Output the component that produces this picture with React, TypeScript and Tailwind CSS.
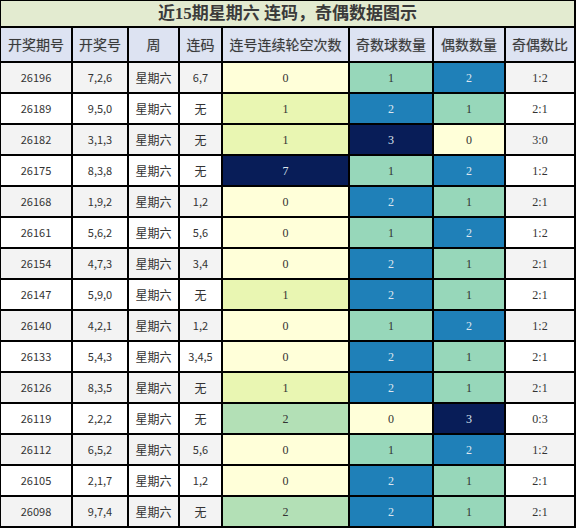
import React from "react";

type Row = [string, string, string, number, number, number, string];

const rows: Row[] = [
  ["26196", "7,2,6", "6,7", 0, 1, 2, "1:2"],
  ["26189", "9,5,0", "无", 1, 2, 1, "2:1"],
  ["26182", "3,1,3", "无", 1, 3, 0, "3:0"],
  ["26175", "8,3,8", "无", 7, 1, 2, "1:2"],
  ["26168", "1,9,2", "1,2", 0, 2, 1, "2:1"],
  ["26161", "5,6,2", "5,6", 0, 1, 2, "1:2"],
  ["26154", "4,7,3", "3,4", 0, 2, 1, "2:1"],
  ["26147", "5,9,0", "无", 1, 2, 1, "2:1"],
  ["26140", "4,2,1", "1,2", 0, 1, 2, "1:2"],
  ["26133", "5,4,3", "3,4,5", 0, 2, 1, "2:1"],
  ["26126", "8,3,5", "无", 1, 2, 1, "2:1"],
  ["26119", "2,2,2", "无", 2, 0, 3, "0:3"],
  ["26112", "6,5,2", "5,6", 0, 1, 2, "1:2"],
  ["26105", "2,1,7", "1,2", 0, 2, 1, "2:1"],
  ["26098", "9,7,4", "无", 2, 2, 1, "2:1"],
];

const streakClass: Record<number, string> = {
  0: "bg-[#ffffd9] text-[#333]",
  1: "bg-[#e9f6b2] text-[#333]",
  2: "bg-[#b3e0b6] text-[#333]",
  7: "bg-[#081d58] text-[#dde6ef]",
};
const countClass: Record<number, string> = {
  0: "bg-[#ffffd9] text-[#333]",
  1: "bg-[#97d7ba] text-[#333]",
  2: "bg-[#1f80b8] text-[#dde6ef]",
  3: "bg-[#081d58] text-[#dde6ef]",
};

const headers = ["开奖期号", "开奖号", "周", "连码", "连号连续轮空次数", "奇数球数量", "偶数数量", "奇偶数比"];

const SANS = "font-['Noto_Sans_CJK_SC','Noto_Sans',sans-serif]";
const SERIF = "font-['Liberation_Serif','Noto_Sans_CJK_SC',serif]";

function HeatCell({ v, cls }: { v: number; cls: string }) {
  return (
    <div className={`flex items-center justify-center text-[12px] font-['Liberation_Serif','Noto_Sans_CJK_SC',serif] ${cls}`}>
      {v}
    </div>
  );
}

export default function App() {
  return (
    <div className="w-[576px] h-[528px] bg-black pt-px pl-px pr-[2px] pb-[2px]">
      <div className="grid grid-cols-[70px_54px_49px_41px_125px_82px_70px_68px] grid-rows-[25px_33px_repeat(15,29px)] gap-[2px]">
        <div className="col-span-8 flex items-center justify-center bg-[#e3ebd0] text-[17px] font-bold text-[#3a3a3a] font-['Liberation_Serif','Noto_Sans_CJK_SC',serif]">
          近15期星期六 连码，奇偶数据图示
        </div>
        {headers.map((h) => (
          <div
            key={h}
            className="flex items-center justify-center bg-[#dde3f2] text-[14px] text-[#3a3a3a] [text-shadow:0_0_1px_rgba(0,0,0,0.3)] font-['Noto_Sans_CJK_SC','Noto_Sans',sans-serif]"
          >
            {h}
          </div>
        ))}
        {rows.map((r, i) => {
          const bg = i % 2 === 0 ? "bg-[#f3f3f3]" : "bg-white";
          return (
            <React.Fragment key={r[0]}>
              <div className={`${bg} ${SANS} flex items-center justify-center text-[11px] text-[#333]`}>{r[0]}</div>
              <div className={`${bg} ${SANS} flex items-center justify-center text-[11px] text-[#333]`}>{r[1]}</div>
              <div className={`${bg} ${SANS} flex items-center justify-center text-[12px] text-[#333]`}>星期六</div>
              <div
                className={`${bg} ${SANS} flex items-center justify-center ${r[2] === "无" ? "text-[12px]" : "text-[11px]"} text-[#333]`}
              >
                {r[2]}
              </div>
              <HeatCell v={r[3]} cls={streakClass[r[3]]} />
              <HeatCell v={r[4]} cls={countClass[r[4]]} />
              <HeatCell v={r[5]} cls={countClass[r[5]]} />
              <div className={`${bg} ${SERIF} flex items-center justify-center text-[12px] text-[#333]`}>{r[6]}</div>
            </React.Fragment>
          );
        })}
      </div>
    </div>
  );
}
